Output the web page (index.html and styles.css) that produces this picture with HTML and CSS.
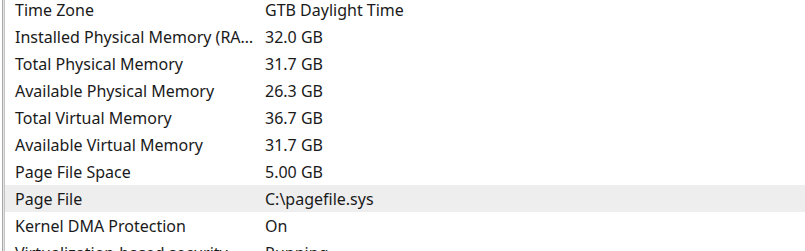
FILE: index.html
```html
<!DOCTYPE html>
<html lang="en">
<head>
    <meta charset="UTF-8">
    <title>System Information</title>
    <link rel="stylesheet" href="styles.css">
</head>
<body>
    <div class="panel">
        <div class="edge"></div>
        <div class="list">
            <div class="row"><span class="item">Time Zone</span><span class="value">GTB Daylight Time</span></div>
            <div class="row"><span class="item">Installed Physical Memory (RAM)</span><span class="value">32.0 GB</span></div>
            <div class="row"><span class="item">Total Physical Memory</span><span class="value">31.7 GB</span></div>
            <div class="row"><span class="item">Available Physical Memory</span><span class="value">26.3 GB</span></div>
            <div class="row"><span class="item">Total Virtual Memory</span><span class="value">36.7 GB</span></div>
            <div class="row"><span class="item">Available Virtual Memory</span><span class="value">31.7 GB</span></div>
            <div class="row"><span class="item">Page File Space</span><span class="value">5.00 GB</span></div>
            <div class="row selected"><span class="item">Page File</span><span class="value">C:\pagefile.sys</span></div>
            <div class="row"><span class="item">Kernel DMA Protection</span><span class="value">On</span></div>
            <div class="row"><span class="item">Virtualization-based security</span><span class="value">Running</span></div>
        </div>
    </div>
</body>
</html>
```

FILE: styles.css
```css
body {
    margin: 0;
    background-color: #fff;
    font-family: "Noto Sans", "Open Sans", sans-serif;
    font-size: 16px;
    color: #1a1a1a;
    overflow: hidden;
}
.panel {
    display: flex;
    height: 251px;
    padding-left: 2px;
    overflow: hidden;
}
.edge {
    width: 1px;
    background-color: #e4e4e4;
    border-left: 1px solid #a8a8a8;
    border-right: 1px solid #c4c4c4;
    flex-shrink: 0;
}
.list {
    flex: 1;
    margin-top: -4px;
}
.row {
    display: flex;
    height: 27px;
    align-items: center;
}
.row.selected {
    background-color: #eeeeee;
}
.item {
    width: 240px;
    padding-left: 10px;
    padding-right: 10px;
    white-space: nowrap;
    overflow: hidden;
    text-overflow: ellipsis;
}
.value {
    white-space: nowrap;
}
```
